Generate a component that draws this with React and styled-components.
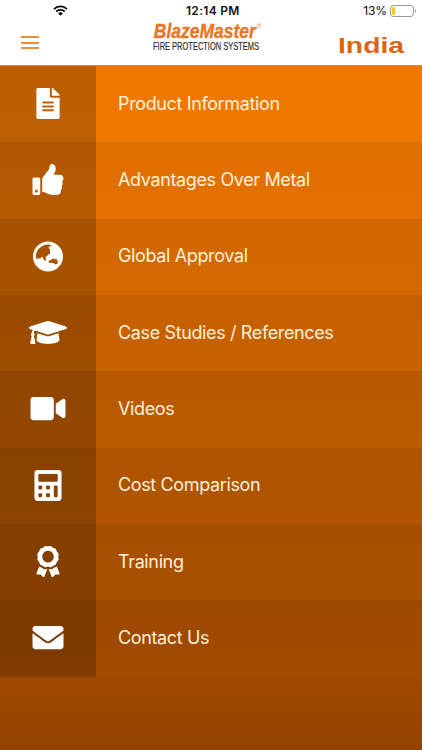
import React from "react";
import styled, {createGlobalStyle} from "styled-components";
import {
    FaAward,
    FaCalculator,
    FaEnvelope,
    FaFileAlt,
    FaGlobeAsia,
    FaGraduationCap,
    FaThumbsUp,
    FaVideo
} from "react-icons/fa";

const GlobalStyle = createGlobalStyle`
  body {
    margin: 0;
    font-family: Inter, "Liberation Sans", sans-serif;
  }
`

const Screen = styled.div`
  display: flex;
  flex-direction: column;
  width: 422px;
  height: 750px;
  overflow: hidden;
  background: linear-gradient(#f37b00 65px, #a14b00 660px, #934200 750px);
`

const Header = styled.header`
  flex: none;
  height: 65px;
  background: #ffffff;
  border-bottom: 1px solid #d98a3c;
`

const StatusBar = styled.div`
  display: grid;
  grid-template-columns: 133px 1fr auto;
  align-items: center;
  height: 21px;
  padding: 0 5px 0 53px;
  color: #111111;
`

const Clock = styled.span`
  font-size: 12px;
  font-weight: 600;
  letter-spacing: 0.3px;
`

const Battery = styled.div`
  display: flex;
  align-items: center;
  gap: 3px;
  font-size: 12px;
  letter-spacing: -0.1px;
`

const Toolbar = styled.div`
  display: grid;
  grid-template-columns: 153px 1fr 66px;
  height: 44px;
  padding-right: 17px;
`

const MenuButton = styled.button`
  display: flex;
  flex-direction: column;
  gap: 3.5px;
  width: 39px;
  height: 30px;
  padding: 15px 0 0 21px;
  border: 0;
  background: none;
  box-sizing: border-box;
`

const MenuLine = styled.span`
  flex: none;
  height: 2px;
  background: #ec8d3b;
`

const Logo = styled.svg`
  display: block;
  overflow: visible;
  font-family: "Liberation Sans", Arial, sans-serif;
`

const Menu = styled.nav`
  display: grid;
  grid-auto-rows: 76.33px;
`

const Row = styled.a`
  display: grid;
  grid-template-columns: 96px 1fr;
  background: ${props => props.$color};
`

const IconCell = styled.span`
  display: flex;
  align-items: center;
  justify-content: center;
  padding-bottom: 1px;
  background: rgba(0, 0, 0, 0.21);
  color: #ffffff;

  svg {
    width: ${props => props.$width || 32}px;
    height: 31px;
  }
`

const Label = styled.span`
  display: flex;
  align-items: center;
  padding: 0 0 2px 22px;
  color: #fff0d8;
  font-size: 18px;
  letter-spacing: -0.37px;
  white-space: nowrap;
`

const items = [
    {label: "Product Information", icon: FaFileAlt, color: "linear-gradient(#ef7700, #f17900)"},
    {label: "Advantages Over Metal", icon: FaThumbsUp, color: "linear-gradient(#df6f00, #e47100)"},
    {label: "Global Approval", icon: FaGlobeAsia, color: "linear-gradient(#d26700, #d56900)"},
    {label: "Case Studies / References", icon: FaGraduationCap, width: 38, color: "linear-gradient(#c45f00, #c86200)"},
    {label: "Videos", icon: FaVideo, width: 36, color: "linear-gradient(#b75900, #bc5b00)"},
    {label: "Cost Comparison", icon: FaCalculator, color: "linear-gradient(#ae5300, #b15500)"},
    {label: "Training", icon: FaAward, color: "linear-gradient(#a64e00, #a95000)"},
    {label: "Contact Us", icon: FaEnvelope, color: "linear-gradient(#9c4900, #a14b00)"}
]

const WifiIcon = () => (
    <svg width="15" height="11" viewBox="0 0 15 11" fill="none" stroke="#000000" strokeWidth="1.8">
        <path d="M1 4.1a9.2 9.2 0 0 1 13 0"/>
        <path d="M3.3 6.5a6 6 0 0 1 8.4 0"/>
        <path d="M5.2 8.4a3.2 3.2 0 0 1 4.6 0L7.5 10.8z" fill="#000000" stroke="none"/>
    </svg>
)

const BatteryIcon = () => (
    <svg width="27" height="12" viewBox="0 0 27 12">
        <rect x="0.5" y="0.5" width="23" height="11" rx="2.6" fill="none" stroke="#9b9b9b"/>
        <path d="M25 4v4c1.5-.5 1.5-3.5 0-4z" fill="#9b9b9b"/>
        <rect x="2" y="2" width="3.2" height="8" rx="1" fill="#f8c81c"/>
    </svg>
)

const BlazeMasterLogo = () => (
    <Logo width="110" height="44" viewBox="0 0 110 44">
        <text x="0.8" y="17" fontSize="20.5" fontWeight="bold" fontStyle="italic" fill="#ea7625"
              stroke="#ea7625" strokeWidth="0.4" textLength="102" lengthAdjust="spacingAndGlyphs">BlazeMaster</text>
        <text x="104" y="7" fontSize="5.5" fill="#ea7625">®</text>
        <text x="0" y="28.6" fontSize="10.4" fill="#2b2526" stroke="#2b2526" strokeWidth="0.15"
              textLength="106" lengthAdjust="spacingAndGlyphs">FIRE PROTECTION SYSTEMS</text>
    </Logo>
)

const RegionLogo = () => (
    <Logo width="66" height="44" viewBox="0 0 66 44">
        <text x="-1" y="31.5" fontSize="21.5" fontWeight="bold" fill="#dd6511"
              textLength="66" lengthAdjust="spacingAndGlyphs">India</text>
    </Logo>
)

export default function App() {
    return (
        <Screen>
            <GlobalStyle/>
            <Header>
                <StatusBar>
                    <WifiIcon/>
                    <Clock>12:14 PM</Clock>
                    <Battery>
                        13%
                        <BatteryIcon/>
                    </Battery>
                </StatusBar>
                <Toolbar>
                    <MenuButton aria-label="Menu">
                        <MenuLine/>
                        <MenuLine/>
                        <MenuLine/>
                    </MenuButton>
                    <BlazeMasterLogo/>
                    <RegionLogo/>
                </Toolbar>
            </Header>
            <Menu>
                {items.map(({label, icon: Icon, width, color}) => (
                    <Row key={label} $color={color}>
                        <IconCell $width={width}><Icon/></IconCell>
                        <Label>{label}</Label>
                    </Row>
                ))}
            </Menu>
        </Screen>
    )
}
